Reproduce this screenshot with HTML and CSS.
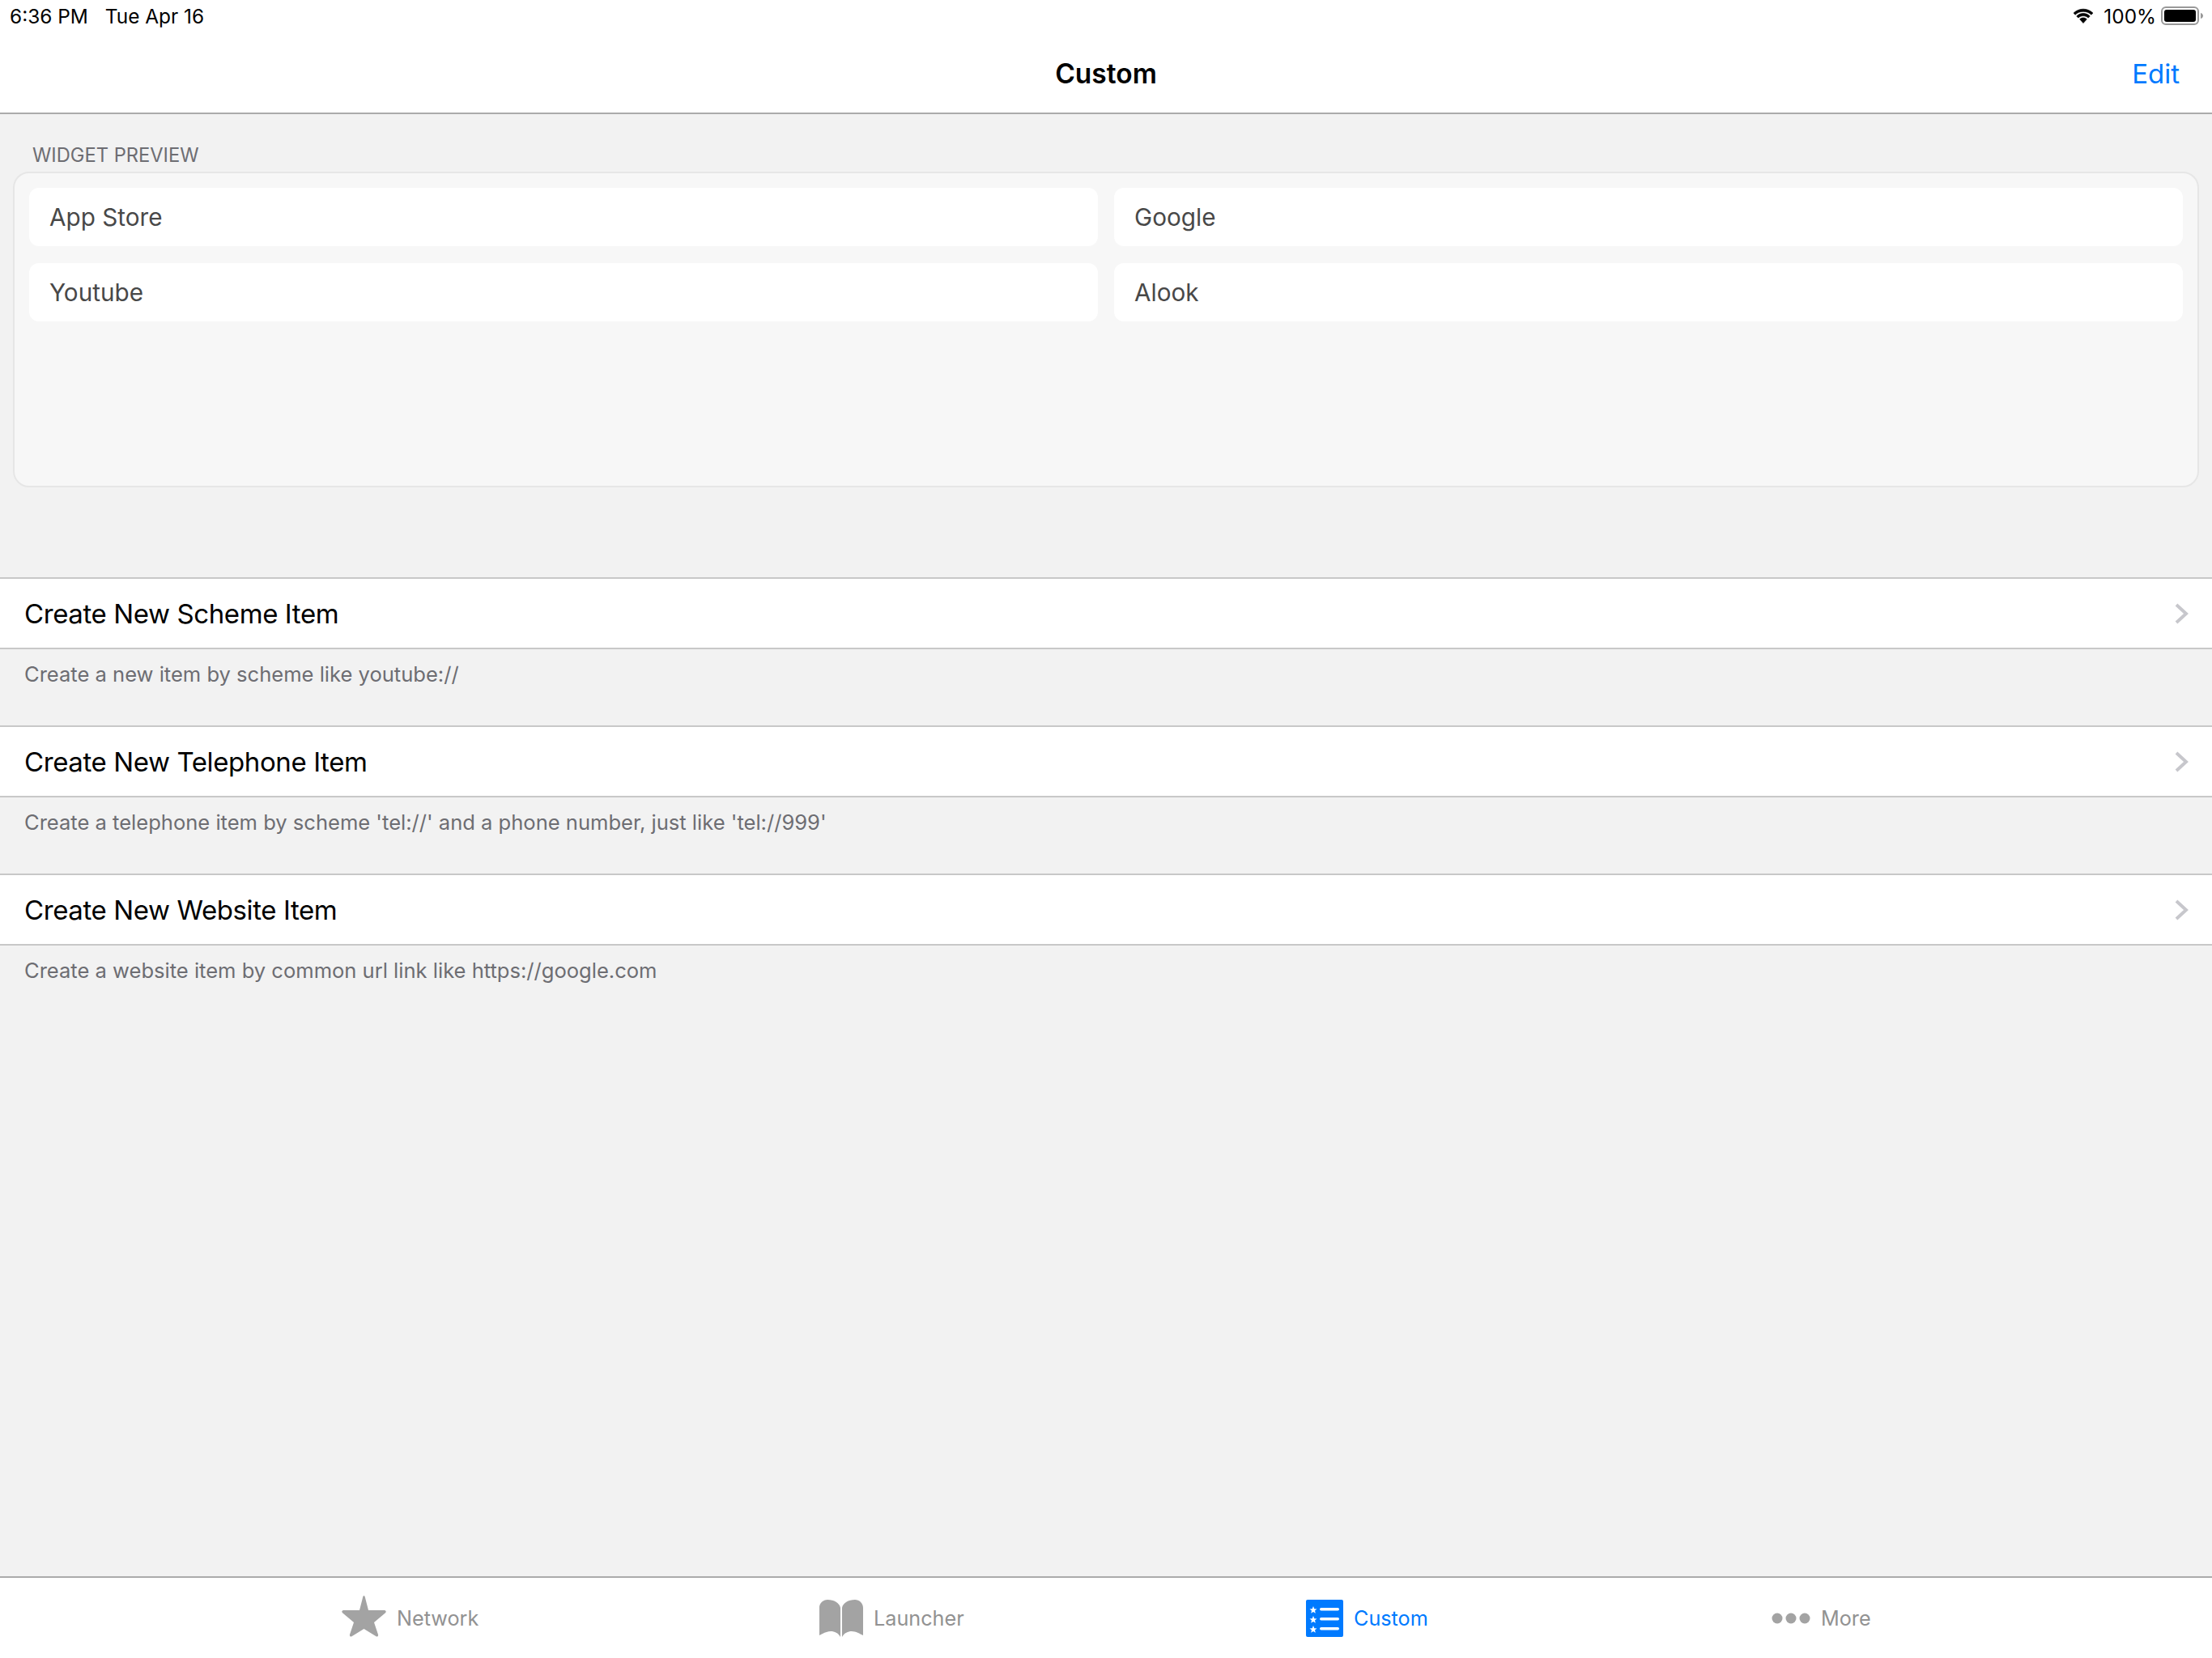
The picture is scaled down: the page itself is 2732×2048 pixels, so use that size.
FILE: index.html
```html
<!DOCTYPE html>
<html lang="en">
<head>
<meta charset="utf-8">
<title>Custom</title>
<link rel="stylesheet" href="styles.css">
</head>
<body>
<div class="app">
  <header class="top">
    <div class="status">
      <div class="status-left"><span>6:36 PM</span><span>Tue Apr 16</span></div>
      <div class="status-right">
        <svg class="wifi" viewBox="0 0 28 20"><path d="M14 4.200c3.900 0 7.400 1.500 10 4l1.900-2.100C22.800 3.100 18.600 1.200 14 1.200S5.200 3.100 2.100 6.100L4 8.200c2.600-2.500 6.100-4 10-4z"/><path d="M14 9.600c2.400 0 4.600.9 6.200 2.500l2-2.200C20 7.800 17.200 6.600 14 6.600S8 7.800 5.800 9.900l2 2.200c1.600-1.600 3.800-2.500 6.200-2.500z"/><path d="M14 12c-1.700 0-3.200.7-4.300 1.700L14 18.500l4.300-4.800C17.200 12.700 15.700 12 14 12z"/></svg>
        <span class="pct">100%</span>
        <svg class="battery" viewBox="0 0 54 24"><rect x="1" y="1" width="45" height="21" rx="5" fill="none" stroke="#999" stroke-width="2"/><rect x="4" y="4" width="39" height="15" rx="3" fill="#000"/><path d="M49 8c2 .5 3 2 3 3.500s-1 3-3 3.500z" fill="#999"/></svg>
      </div>
    </div>
    <nav class="nav"><span></span><h1 class="nav-title">Custom</h1><span class="nav-edit">Edit</span></nav>
  </header>

  <main class="content">
    <div class="section-label">WIDGET PREVIEW</div>
    <section class="preview">
      <div class="cell">App Store</div>
      <div class="cell">Google</div>
      <div class="cell">Youtube</div>
      <div class="cell">Alook</div>
    </section>

    <div class="group group-first">
      <div class="row"><span>Create New Scheme Item</span><svg class="chev" viewBox="0 0 18 26"><path d="M2 2l12 11-12 11"/></svg></div>
      <p class="foot">Create a new item by scheme like youtube://</p>
    </div>
    <div class="group">
      <div class="row"><span>Create New Telephone Item</span><svg class="chev" viewBox="0 0 18 26"><path d="M2 2l12 11-12 11"/></svg></div>
      <p class="foot">Create a telephone item by scheme 'tel://' and a phone number, just like 'tel://999'</p>
    </div>
    <div class="group">
      <div class="row"><span>Create New Website Item</span><svg class="chev" viewBox="0 0 18 26"><path d="M2 2l12 11-12 11"/></svg></div>
      <p class="foot">Create a website item by common url link like https://google.com</p>
    </div>
  </main>

  <footer class="tabs">
    <div class="tab">
      <svg class="ico-star" viewBox="0 0 55 51"><path d="M27.500 0c.8 0 1.200 1 1.500 2.500L33 18h19c2.500 0 3.500 1.500 2 3.200L40 33l5 15c.5 2.200-1 3.200-2.500 2.200L27.500 41 12.500 50.200C11 51.200 9.500 50.200 10 48l5-15L1 21.200C-.5 19.500.5 18 3 18h19l4-15.500C26.300 1 26.700 0 27.500 0z"/></svg>
      <span>Network</span>
    </div>
    <div class="tab">
      <svg class="ico-book" viewBox="0 0 54 46"><path d="M0 10C0 4 5 0 10 0c8 0 15 4 16 10v36c-3-5-7-7-12-7-5 0-10 3-14 5z"/><path d="M54 10c0-6-5-10-10-10C36 0 29 4 28 10v36c3-5 7-7 12-7 5 0 10 3 14 5z"/></svg>
      <span>Launcher</span>
    </div>
    <div class="tab tab-on">
      <svg class="ico-list" viewBox="0 0 46 46"><rect width="46" height="46" rx="2" fill="#007aff"/><g fill="#fff"><path d="M9 8l1.300 3.200 3.200.2-2.500 2.100.8 3.300L9 15l-2.800 1.800.8-3.300-2.500-2.100 3.200-.2z"/><path d="M9 20l1.300 3.200 3.200.2-2.500 2.100.8 3.300L9 27l-2.800 1.800.8-3.300-2.500-2.100 3.200-.2z"/><path d="M9 32l1.300 3.200 3.200.2-2.500 2.100.8 3.300L9 39l-2.800 1.800.8-3.300-2.500-2.100 3.200-.2z"/><rect x="17" y="10" width="24" height="3.500" rx="1.700"/><rect x="17" y="22" width="24" height="3.500" rx="1.700"/><rect x="17" y="34" width="24" height="3.500" rx="1.700"/></g></svg>
      <span>Custom</span>
    </div>
    <div class="tab">
      <svg class="ico-more" viewBox="0 0 48 14"><circle cx="7" cy="7" r="6.500"/><circle cx="24" cy="7" r="6.500"/><circle cx="41" cy="7" r="6.500"/></svg>
      <span>More</span>
    </div>
  </footer>
</div>
</body>
</html>
```

FILE: styles.css
```css
* { box-sizing: border-box; }
html, body { margin: 0; padding: 0; }
body {
  width: 2732px;
  height: 2048px;
  overflow: hidden;
  font-family: Inter, "Liberation Sans", sans-serif;
  background: #f2f2f2;
}
.app { height: 2048px; display: flex; flex-direction: column; }

.top { height: 141px; background: #fff; border-bottom: 2px solid #ababab; flex: none; }
.status {
  height: 40px;
  display: flex;
  justify-content: space-between;
  align-items: center;
  padding: 0 9px 0 12px;
  font-size: 24.4px;
  color: #000;
}
.status-left { display: flex; gap: 21px; }
.status-right { display: flex; align-items: center; }
.wifi { width: 28px; height: 20px; margin-right: 11px; stroke: #000; stroke-width: 0.7; }
.pct { margin-right: 6px; }
.battery { width: 54px; height: 24px; }

.nav {
  height: 99px;
  display: grid;
  grid-template-columns: 1fr auto 1fr;
  align-items: center;
  padding: 2px 40px 0 0;
}
.nav-title { margin: 0 0 0 40px; font-size: 33.5px; font-weight: 600; color: #000; }
.nav-edit { justify-self: end; font-size: 33px; color: #007aff; }

.content { flex: 1; min-height: 0; }
.section-label { padding: 32px 0 0 40px; height: 71px; font-size: 23.7px; color: #6d6d72; line-height: 37px; }
.preview {
  margin: 0 16px;
  height: 390px;
  padding: 18px;
  background: #f7f7f7;
  border: 2px solid #e6e6e6;
  border-radius: 20px;
  display: grid;
  grid-template-columns: 1fr 1fr;
  grid-auto-rows: 72px;
  column-gap: 20px;
  row-gap: 21px;
}
.cell {
  background: #fff;
  border-radius: 12px;
  padding-left: 25px;
  display: flex;
  align-items: center;
  font-size: 29.7px;
  color: #484848;
}

.group { height: 183px; }
.group-first { margin-top: 111px; }
.row {
  height: 89px;
  background: #fff;
  border-top: 2px solid #c8c8c8;
  border-bottom: 2px solid #c8c8c8;
  display: flex;
  align-items: center;
  justify-content: space-between;
  padding: 0 28px 0 30px;
  font-size: 33px;
  letter-spacing: -0.4px;
  color: #000;
}
.chev { width: 18px; height: 26px; fill: none; stroke: #c7c7cc; stroke-width: 4; }
.foot { margin: 0; padding: 14px 0 0 30px; font-size: 25.55px; line-height: 34px; color: #6d6d72; }

.tabs {
  height: 101px;
  flex: none;
  background: #fff;
  border-top: 2px solid #ababab;
  display: grid;
  grid-template-columns: 590px 601px 575px 1fr;
  padding-left: 422px;
}
.tab {
  display: flex;
  align-items: center;
  gap: 13px;
  font-size: 25.2px;
  color: #929292;
}
.tab svg { fill: #a3a3a3; flex: none; }
.tab-on { color: #007aff; }
.ico-star { width: 55px; height: 51px; margin-bottom: 4px; }
.ico-book { width: 54px; height: 46px; }
.ico-list { width: 46px; height: 46px; }
.ico-more { width: 48px; height: 14px; }
```
